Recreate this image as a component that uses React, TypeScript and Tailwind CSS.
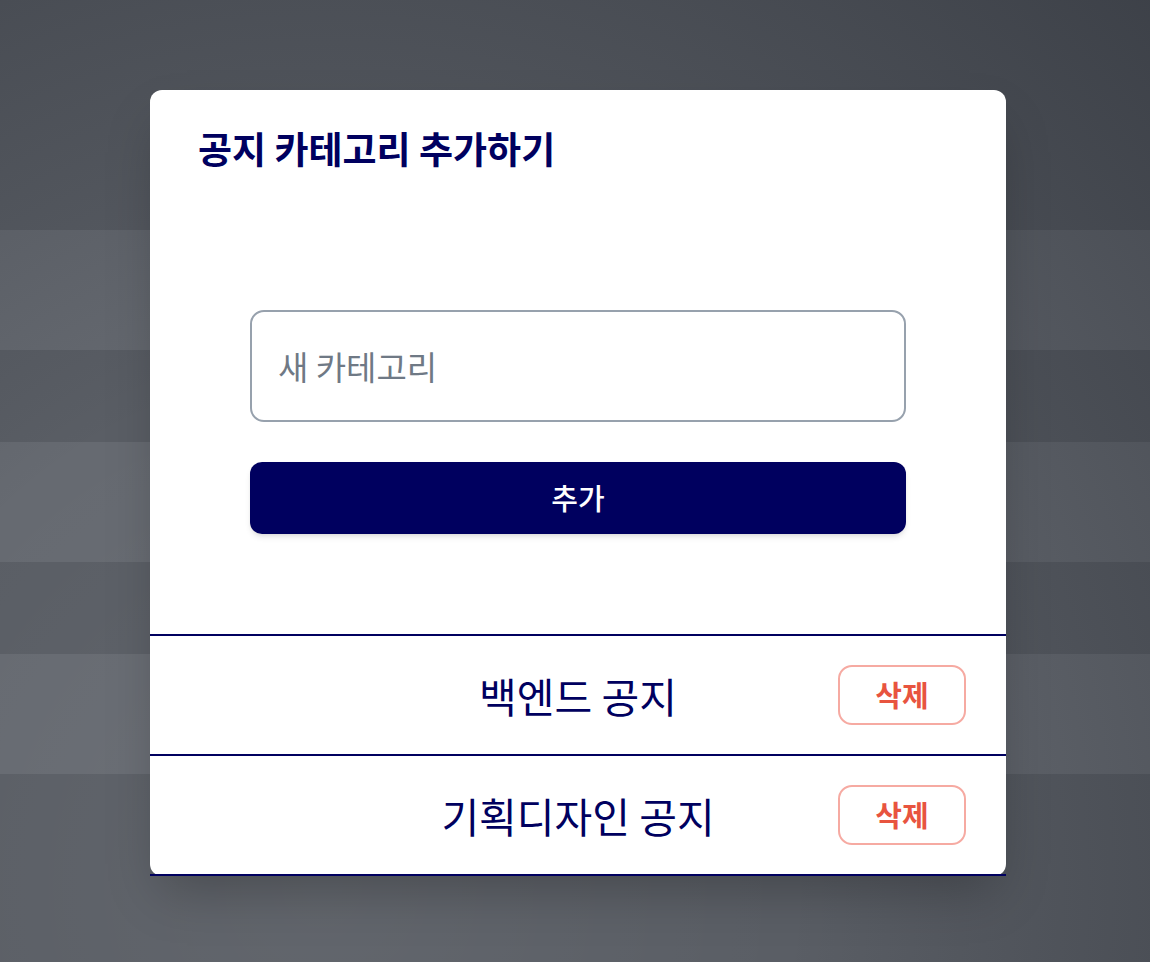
import { useState } from 'react';

const bands = [
  { h: 'h-[230px]', tone: 'bg-[#5a5e65]' },
  { h: 'h-[120px]', tone: 'bg-[#666a71]' },
  { h: 'h-[92px]', tone: 'bg-[#5a5e65]' },
  { h: 'h-[120px]', tone: 'bg-[#666a71]' },
  { h: 'h-[92px]', tone: 'bg-[#5a5e65]' },
  { h: 'h-[120px]', tone: 'bg-[#666a71]' },
  { h: 'h-[188px]', tone: 'bg-[#5a5e65]' },
];

export default function App() {
  const [name, setName] = useState('');
  const [categories, setCategories] = useState(['백엔드 공지', '기획디자인 공지']);

  const addCategory = () => {
    if (!name.trim()) return;
    setCategories(prev => [...prev, name.trim()]);
    setName('');
  };

  return (
    <div
      className="relative h-[962px] w-full overflow-hidden"
      style={{ fontFamily: '"Noto Sans CJK KR", "Noto Sans", sans-serif' }}
    >
      {/* page behind the backdrop */}
      <div className="flex flex-col">
        {bands.map((b, i) => (
          <div key={i} className={`${b.h} ${b.tone}`} />
        ))}
      </div>

      {/* backdrop + modal */}
      <div className="absolute inset-0 flex items-start justify-center bg-[radial-gradient(ellipse_at_28%_92%,rgba(255,255,255,0.05)_0%,rgba(0,0,0,0)_40%,rgba(8,12,20,0.35)_100%)] pl-[6px] pt-[90px]">
        <div className="w-[856px] rounded-xl bg-white shadow-2xl">
          <div className="px-12 pt-[30px]">
            <h2 className="text-[37px] font-bold leading-[56px] text-[#00005f]">
              공지 카테고리 추가하기
            </h2>
          </div>

          <div className="flex flex-col gap-10 px-[100px] pb-[100px] pt-[134px]">
            <input
              value={name}
              onChange={e => setName(e.target.value)}
              placeholder="새 카테고리"
              className="h-[112px] w-full rounded-[14px] border-2 border-[#97a1ad] px-[26px] text-[33px] text-gray-800 outline-none placeholder:text-[#6f7985]"
            />
            <button
              onClick={addCategory}
              className="h-[72px] w-full rounded-xl bg-[#00005f] text-[29px] font-medium text-white shadow-md"
            >
              추가
            </button>
          </div>

          <div>
            {categories.map((c, i) => (
              <div
                key={c + i}
                className="grid h-[120px] grid-cols-[1fr_auto_1fr] items-center border-t-2 border-[#00005f] px-10 last:h-[122px] last:border-b-2"
              >
                <span />
                <span className="text-[41px] leading-none text-[#00005f]">{c}</span>
                <button
                  onClick={() => setCategories(prev => prev.filter((_, j) => j !== i))}
                  className="h-[60px] w-[128px] justify-self-end rounded-[14px] border-2 border-[#f6aaa2] text-[29px] font-semibold text-[#e8543f]"
                >
                  삭제
                </button>
              </div>
            ))}
          </div>
        </div>
      </div>
    </div>
  );
}
